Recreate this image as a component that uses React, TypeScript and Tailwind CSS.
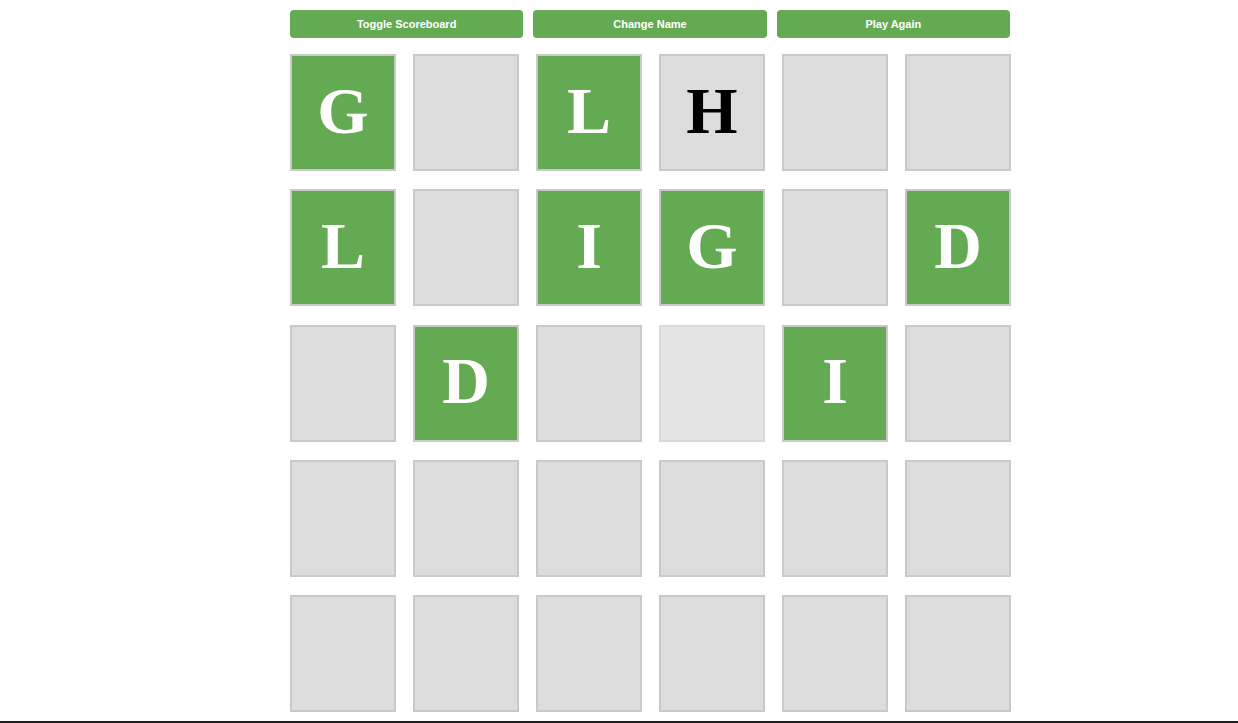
const grid: { letter?: string; state: "green" | "empty" | "grey" | "light" }[][] = [
  [
    { letter: "G", state: "green" },
    { state: "empty" },
    { letter: "L", state: "green" },
    { letter: "H", state: "grey" },
    { state: "empty" },
    { state: "empty" },
  ],
  [
    { letter: "L", state: "green" },
    { state: "empty" },
    { letter: "I", state: "green" },
    { letter: "G", state: "green" },
    { state: "empty" },
    { letter: "D", state: "green" },
  ],
  [
    { state: "empty" },
    { letter: "D", state: "green" },
    { state: "empty" },
    { state: "light" },
    { letter: "I", state: "green" },
    { state: "empty" },
  ],
  [
    { state: "empty" },
    { state: "empty" },
    { state: "empty" },
    { state: "empty" },
    { state: "empty" },
    { state: "empty" },
  ],
  [
    { state: "empty" },
    { state: "empty" },
    { state: "empty" },
    { state: "empty" },
    { state: "empty" },
    { state: "empty" },
  ],
];

function Tile({ letter, state }: { letter?: string; state: string }) {
  let cls = "border-[#c9c9c9] bg-[#dddddd] text-black";
  if (state === "green") cls = "border-[#c9c9c9] bg-[#64aa52] text-white";
  if (state === "light") cls = "border-[#dadada] bg-[#e4e4e4] text-black";

  return (
    <div
      className={`flex h-[117px] items-center justify-center border-2 pb-1 font-['Liberation_Serif',serif] text-[66px] font-bold leading-none ${cls}`}
    >
      {letter}
    </div>
  );
}

export default function App() {
  return (
    <div className="min-h-screen bg-white">
      <div className="ml-[290px] pt-[10px]">
        {/* Botones */}
        <div className="grid w-[720px] grid-cols-3 gap-[10px]">
          {["Toggle Scoreboard", "Change Name", "Play Again"].map((label) => (
            <button
              key={label}
              className="h-[28px] rounded-[4px] bg-[#64aa52] font-['Liberation_Sans',sans-serif] text-[11px] font-bold text-white"
            >
              {label}
            </button>
          ))}
        </div>

        {/* Tablero */}
        <div className="mt-[16px] grid w-[721px] grid-cols-6 gap-x-[17px] gap-y-[18.25px]">
          {grid.map((row, r) =>
            row.map((cell, c) => <Tile key={`${r}-${c}`} letter={cell.letter} state={cell.state} />)
          )}
        </div>
      </div>

      <div className="fixed inset-x-0 bottom-0 h-[2px] bg-[#1e1e1e]" />
    </div>
  );
}
